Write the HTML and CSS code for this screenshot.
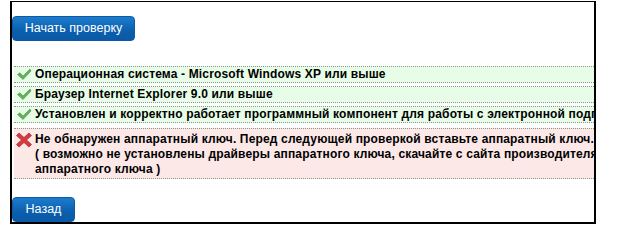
FILE: index.html
```html
<!DOCTYPE html>
<html lang="ru">
<head>
<meta charset="utf-8">
<link rel="stylesheet" href="styles.css">
</head>
<body>
<div class="box">
  <button class="btn btn-start">Начать проверку</button>
  <div class="checks">
    <div class="row ok">
      <svg class="ico" viewBox="0 0 16 16" width="16" height="16"><path d="M1.5 8.5 L4 6.8 L7 10 L14 3 L15 5 L7 13.5 Z" fill="#62b25c" stroke="#46923f" stroke-width="0.6"/></svg>
      <span>Операционная система - Microsoft Windows XP или выше</span>
    </div>
    <div class="row ok">
      <svg class="ico" viewBox="0 0 16 16" width="16" height="16"><path d="M1.5 8.5 L4 6.8 L7 10 L14 3 L15 5 L7 13.5 Z" fill="#62b25c" stroke="#46923f" stroke-width="0.6"/></svg>
      <span>Браузер Internet Explorer 9.0 или выше</span>
    </div>
    <div class="row ok">
      <svg class="ico" viewBox="0 0 16 16" width="16" height="16"><path d="M1.5 8.5 L4 6.8 L7 10 L14 3 L15 5 L7 13.5 Z" fill="#62b25c" stroke="#46923f" stroke-width="0.6"/></svg>
      <span>Установлен и корректно работает программный компонент для работы с электронной подписью</span>
    </div>
    <div class="row err">
      <svg class="ico" viewBox="0 0 16 16" width="16" height="16"><path d="M3 1 L8 5.5 L13 1 L15.5 3.5 L10.5 8 L15.5 12.5 L13 15 L8 10.5 L3 15 L0.5 12.5 L5.5 8 L0.5 3.5 Z" fill="#d63a3d" stroke="#a52226" stroke-width="0.7"/></svg>
      <span>Не обнаружен аппаратный ключ. Перед следующей проверкой вставьте аппаратный ключ.<br>( возможно не установлены драйверы аппаратного ключа, скачайте с сайта производителя<br>аппаратного ключа )</span>
    </div>
  </div>
  <button class="btn btn-back">Назад</button>
</div>
</body>
</html>
```

FILE: styles.css
```css
html, body {
  margin: 0;
  padding: 0;
  background: #fff;
}
body {
  font-family: "Liberation Sans", Arial, sans-serif;
  padding: 0 0 0 10px;
}
.box {
  width: 582px;
  height: 220px;
  border: 2px solid #000;
  border-top-width: 1px;
  margin-top: 1px;
  overflow: hidden;
  display: flex;
  flex-direction: column;
  align-items: flex-start;
}
.btn {
  font-family: "Liberation Sans", Arial, sans-serif;
  font-size: 12.5px;
  color: #fff;
  border: 1px solid #0c5aa6;
  border-radius: 4px;
  background: linear-gradient(#1d7ccc, #0b5fae 60%, #0a59a6);
  height: 27px;
  padding: 0 0 1px 0;
  cursor: pointer;
}
.btn-start {
  margin-top: 14px;
  width: 123px;
}
.btn-back {
  margin-top: 18px;
  width: 63px;
}
.checks {
  margin: 25px 0 0 2px;
  width: 760px;
  display: flex;
  flex-direction: column;
  gap: 3px;
}
.row {
  display: flex;
  align-items: flex-start;
  gap: 3px;
  padding: 0 0 0 2px;
  border-top: 1px dotted #8a9a8a;
  border-bottom: 1px dotted #8a9a8a;
  font-size: 12px;
  letter-spacing: 0.16px;
  font-weight: bold;
  color: #000;
  line-height: 14px;
}
.row.ok {
  background: #e8fde8;
  min-height: 14px;
}
.row.err {
  background: #fde8e8;
  line-height: 15px;
  padding-top: 3px;
  padding-bottom: 1px;
  margin-top: 2px;
}
.ico {
  flex: none;
}
.ok .ico {
  margin-top: -1px;
}
.row span {
  white-space: nowrap;
}
```
